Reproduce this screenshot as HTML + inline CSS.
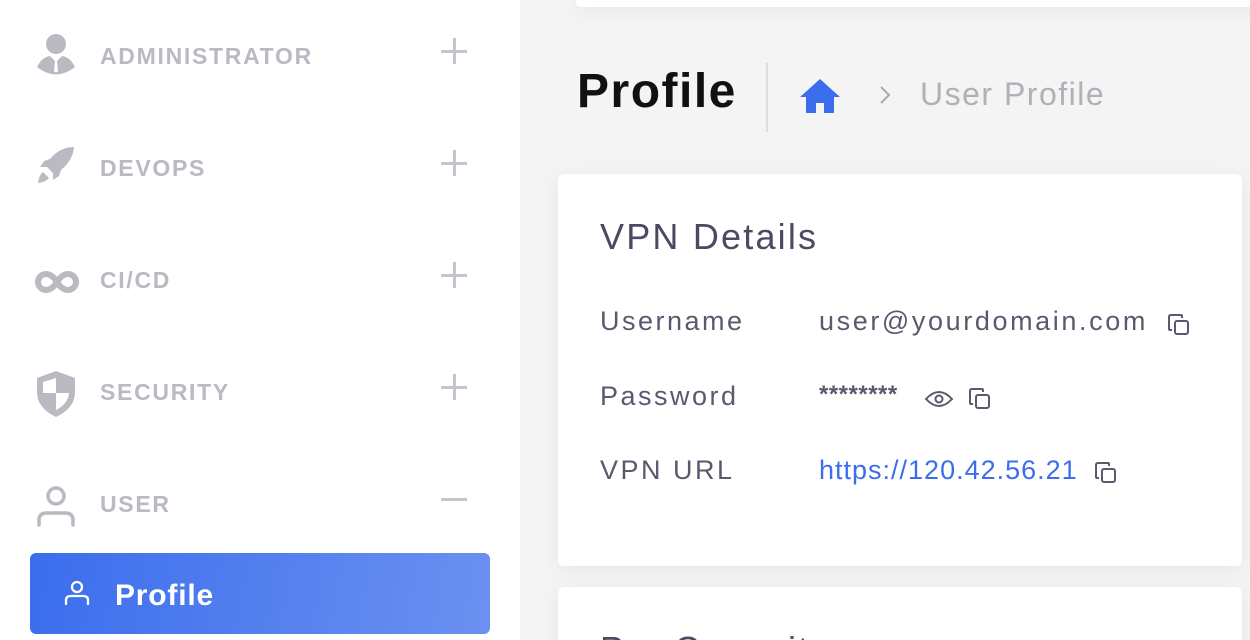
<!DOCTYPE html>
<html><head><meta charset="utf-8"><style>
*{margin:0;padding:0;box-sizing:border-box}
html,body{width:1250px;height:640px;overflow:hidden}
body{background:#f4f4f5;font-family:"Liberation Sans",sans-serif;position:relative}
.side{position:absolute;left:0;top:0;width:520px;height:640px;background:#fff}
.item{position:absolute;left:0;width:520px;height:40px}
.item .lbl{position:absolute;left:100px;font-size:23px;font-weight:bold;color:#b9bac2;letter-spacing:1.7px}
.item svg.ic{position:absolute;left:34px}
.pm{position:absolute;left:441px;width:26px;height:26px}
.pm:before{content:"";position:absolute;left:0;top:12px;width:26px;height:2.5px;background:#c4c5cc}
.pm.p:after{content:"";position:absolute;left:12px;top:0;width:2.5px;height:26px;background:#c4c5cc}
.active{position:absolute;left:30px;top:553px;width:460px;height:81px;border-radius:6px;background:linear-gradient(100deg,#3b6ded,#6b91f0)}
.active span{position:absolute;left:85px;top:26px;color:#fff;font-size:30px;font-weight:bold;letter-spacing:0.8px}
.card{position:absolute;background:#fff;border-radius:6px;box-shadow:0 4px 20px rgba(0,0,0,.06);overflow:hidden}
.row{position:absolute;left:42px;font-size:27px;color:#5a5a6e;letter-spacing:2.5px}
.val{position:absolute;left:261px;font-size:27px;color:#5a5a6e;letter-spacing:2.6px}
</style></head><body>
<div class="side">
 <div class="item" style="top:36px">
  <svg class="ic" width="42" height="44" viewBox="0 0 42 44" style="top:-4px"><circle cx="22" cy="12" r="10" fill="#b9bac2"/><path d="M3 35 Q8 25 16 24 L22 30 L28 24 Q36 25 41 35 Q22 50 3 35Z" fill="#b9bac2"/><path d="M21 28 L23 28 L24 40 L20 40Z" fill="#fff"/></svg>
  <span class="lbl" style="top:7px">ADMINISTRATOR</span><div class="pm p" style="top:2px"></div></div>
 <div class="item" style="top:148px">
  <svg class="ic" width="42" height="40" viewBox="0 0 42 40" style="top:-3px"><path d="M40 2 Q26 2 16 14 L10 16 L6 22 L13 22 L19 28 L19 35 L25 31 L27 25 Q39 15 40 2Z" fill="#b9bac2"/><path d="M9 27 Q5 30 4 38 Q12 37 15 33Z" fill="#b9bac2"/></svg>
  <span class="lbl" style="top:7px">DEVOPS</span><div class="pm p" style="top:2px"></div></div>
 <div class="item" style="top:260px">
  <svg class="ic" width="46" height="24" viewBox="0 0 46 24" style="top:10px"><path d="M12 4 a8 8 0 1 0 0 16 Q18 20 23 12 Q28 4 34 4 a8 8 0 1 1 0 16 Q28 20 23 12 Q18 4 12 4Z" fill="none" stroke="#b9bac2" stroke-width="6"/></svg>
  <span class="lbl" style="top:7px">CI/CD</span><div class="pm p" style="top:2px"></div></div>
 <div class="item" style="top:372px">
  <svg class="ic" width="44" height="48" viewBox="0 0 44 48" style="top:-2px;left:34px"><path d="M22 1 L41 8 L41 22 Q41 38 22 47 Q3 38 3 22 L3 8Z" fill="#b9bac2"/><path d="M22 8 L9 12 L9 23 L22 23Z M22 23 L35 23 Q34 34 22 40Z" fill="#fff"/></svg>
  <span class="lbl" style="top:7px">SECURITY</span><div class="pm p" style="top:2px"></div></div>
 <div class="item" style="top:484px">
  <svg class="ic" width="42" height="44" viewBox="0 0 42 44" style="top:0;left:36px"><circle cx="20" cy="12" r="8" fill="none" stroke="#b9bac2" stroke-width="3.5"/><path d="M3 41 L3 36 Q3 29 11 29 L29 29 Q37 29 37 36 L37 41" fill="none" stroke="#b9bac2" stroke-width="3.5" stroke-linecap="round"/></svg>
  <span class="lbl" style="top:7px">USER</span><div class="pm" style="top:2px"></div></div>
 <div class="active">
  <svg width="28" height="26" viewBox="0 0 28 26" style="position:absolute;left:33px;top:27px"><circle cx="14" cy="7" r="5" fill="none" stroke="#fff" stroke-width="2.3"/><path d="M3 24 L3 20 Q3 16 8 16 L20 16 Q25 16 25 20 L25 24" fill="none" stroke="#fff" stroke-width="2.3" stroke-linecap="round"/></svg>
  <span>Profile</span></div>
</div>
<div class="card" style="left:576px;top:-10px;width:690px;height:17px;border-radius:4px"></div>
<div style="position:absolute;left:577px;top:64px;font-size:48px;font-weight:bold;color:#111;letter-spacing:1.5px">Profile</div>
<div style="position:absolute;left:766px;top:63px;width:2px;height:69px;background:#ddd"></div>
<svg width="42" height="36" viewBox="0 0 42 36" style="position:absolute;left:799px;top:78px"><path d="M21 1 L41 19 L35 19 L35 35 L25 35 L25 25 L17 25 L17 35 L7 35 L7 19 L1 19Z" fill="#3b6ded"/></svg>
<svg width="14" height="22" viewBox="0 0 14 22" style="position:absolute;left:878px;top:84px"><path d="M3 3 L11 11 L3 19" fill="none" stroke="#aaa" stroke-width="2"/></svg>
<div style="position:absolute;left:920px;top:76px;font-size:32px;color:#b0b0b8;letter-spacing:1.5px">User Profile</div>
<div class="card" style="left:558px;top:174px;width:684px;height:392px">
 <div style="position:absolute;left:42px;top:42px;font-size:36px;color:#4a4a62;letter-spacing:2.2px">VPN Details</div>
 <div class="row" style="top:132px">Username</div><div class="val" style="top:132px">user@yourdomain.com</div>
 <div class="row" style="top:207px">Password</div><div class="val" style="top:207px;font-size:24px;font-weight:bold;letter-spacing:0.5px">********</div>
 <div class="row" style="top:281px">VPN URL</div><div class="val" style="top:281px;color:#3b6ded;letter-spacing:1px">https://120.42.56.21</div>
</div>
<svg width="0" height="0" style="position:absolute"><defs><g id="cp"><path d="M4 16 L2 16 Q1 16 1 15 L1 3 Q1 1 3 1 L13 1 Q14 1 14 2 L14 4" fill="none" stroke="#5a5a6e" stroke-width="2"/><rect x="7" y="7" width="13" height="13" rx="2" fill="none" stroke="#5a5a6e" stroke-width="2"/></g></defs></svg>
<svg width="22" height="22" style="position:absolute;left:1168px;top:314px"><use href="#cp"/></svg>
<svg width="22" height="22" style="position:absolute;left:969px;top:388px"><use href="#cp"/></svg>
<svg width="22" height="22" style="position:absolute;left:1095px;top:462px"><use href="#cp"/></svg>
<svg width="30" height="20" viewBox="0 0 30 20" style="position:absolute;left:924px;top:389px"><path d="M2 10 Q15 -4 28 10 Q15 24 2 10Z" fill="none" stroke="#5a5a6e" stroke-width="2"/><circle cx="15" cy="10" r="3.5" fill="none" stroke="#5a5a6e" stroke-width="2"/></svg>
<div class="card" style="left:558px;top:587px;width:684px;height:80px">
 <div style="position:absolute;left:42px;top:42px;font-size:36px;color:#4a4a62;letter-spacing:2px">Pre Commit</div>
</div>
</body></html>
